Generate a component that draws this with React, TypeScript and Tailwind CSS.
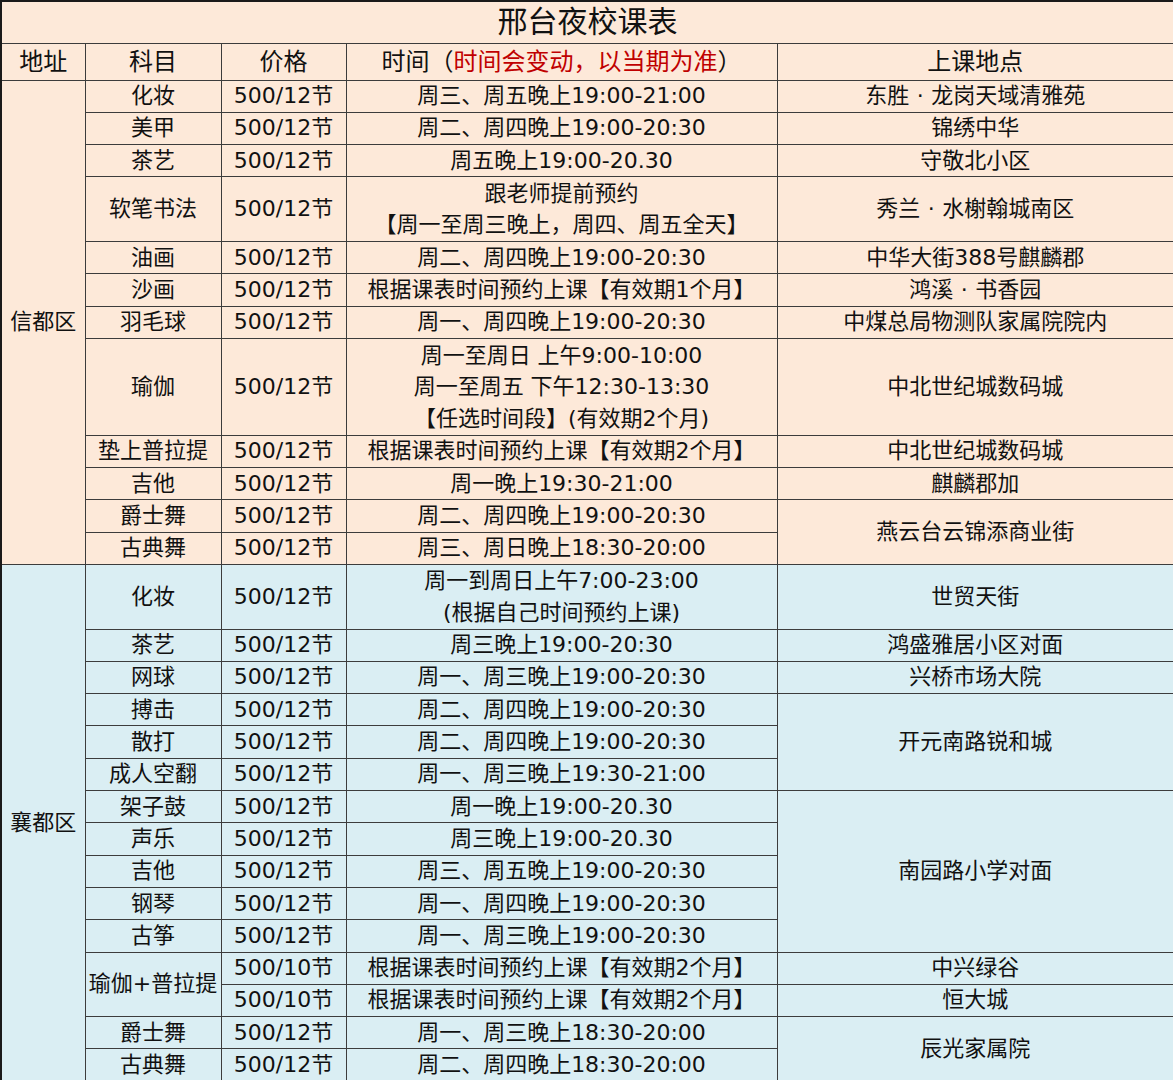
/**
 * 邢台夜校课表
 * Excel-style schedule table with merged cells
 */

type Row = {
  units: number
  subject?: string
  subjectSpan?: number
  price: string
  time: string[]
  place?: string
  placeSpan?: number
}

type Section = {
  area: string
  bg: string
  rows: Row[]
}

const sections: Section[] = [
  {
    area: '信都区',
    bg: 'bg-[#fde9d9]',
    rows: [
      { units: 1, subject: '化妆', price: '500/12节', time: ['周三、周五晚上19:00-21:00'], place: '东胜·龙岗天域清雅苑' },
      { units: 1, subject: '美甲', price: '500/12节', time: ['周二、周四晚上19:00-20:30'], place: '锦绣中华' },
      { units: 1, subject: '茶艺', price: '500/12节', time: ['周五晚上19:00-20.30'], place: '守敬北小区' },
      { units: 2, subject: '软笔书法', price: '500/12节', time: ['跟老师提前预约', '【周一至周三晚上，周四、周五全天】'], place: '秀兰·水榭翰城南区' },
      { units: 1, subject: '油画', price: '500/12节', time: ['周二、周四晚上19:00-20:30'], place: '中华大街388号麒麟郡' },
      { units: 1, subject: '沙画', price: '500/12节', time: ['根据课表时间预约上课【有效期1个月】'], place: '鸿溪·书香园' },
      { units: 1, subject: '羽毛球', price: '500/12节', time: ['周一、周四晚上19:00-20:30'], place: '中煤总局物测队家属院院内' },
      { units: 3, subject: '瑜伽', price: '500/12节', time: ['周一至周日 上午9:00-10:00', '周一至周五 下午12:30-13:30', '【任选时间段】(有效期2个月)'], place: '中北世纪城数码城' },
      { units: 1, subject: '垫上普拉提', price: '500/12节', time: ['根据课表时间预约上课【有效期2个月】'], place: '中北世纪城数码城' },
      { units: 1, subject: '吉他', price: '500/12节', time: ['周一晚上19:30-21:00'], place: '麒麟郡加' },
      { units: 1, subject: '爵士舞', price: '500/12节', time: ['周二、周四晚上19:00-20:30'], place: '燕云台云锦添商业街', placeSpan: 2 },
      { units: 1, subject: '古典舞', price: '500/12节', time: ['周三、周日晚上18:30-20:00'] },
    ],
  },
  {
    area: '襄都区',
    bg: 'bg-[#daeef3]',
    rows: [
      { units: 2, subject: '化妆', price: '500/12节', time: ['周一到周日上午7:00-23:00', '(根据自己时间预约上课)'], place: '世贸天街' },
      { units: 1, subject: '茶艺', price: '500/12节', time: ['周三晚上19:00-20:30'], place: '鸿盛雅居小区对面' },
      { units: 1, subject: '网球', price: '500/12节', time: ['周一、周三晚上19:00-20:30'], place: '兴桥市场大院' },
      { units: 1, subject: '搏击', price: '500/12节', time: ['周二、周四晚上19:00-20:30'], place: '开元南路锐和城', placeSpan: 3 },
      { units: 1, subject: '散打', price: '500/12节', time: ['周二、周四晚上19:00-20:30'] },
      { units: 1, subject: '成人空翻', price: '500/12节', time: ['周一、周三晚上19:30-21:00'] },
      { units: 1, subject: '架子鼓', price: '500/12节', time: ['周一晚上19:00-20.30'], place: '南园路小学对面', placeSpan: 5 },
      { units: 1, subject: '声乐', price: '500/12节', time: ['周三晚上19:00-20.30'] },
      { units: 1, subject: '吉他', price: '500/12节', time: ['周三、周五晚上19:00-20:30'] },
      { units: 1, subject: '钢琴', price: '500/12节', time: ['周一、周四晚上19:00-20:30'] },
      { units: 1, subject: '古筝', price: '500/12节', time: ['周一、周三晚上19:00-20:30'] },
      { units: 1, subject: '瑜伽+普拉提', subjectSpan: 2, price: '500/10节', time: ['根据课表时间预约上课【有效期2个月】'], place: '中兴绿谷' },
      { units: 1, price: '500/10节', time: ['根据课表时间预约上课【有效期2个月】'], place: '恒大城' },
      { units: 1, subject: '爵士舞', price: '500/12节', time: ['周一、周三晚上18:30-20:00'], place: '辰光家属院', placeSpan: 2 },
      { units: 1, subject: '古典舞', price: '500/12节', time: ['周二、周四晚上18:30-20:00'] },
    ],
  },
]

const cell = 'border border-[#3c3c3c] p-0 text-center align-middle'

// render middle dot as a full-width glyph like the source sheet
function Text({ value }: { value: string }) {
  const parts = value.split('·')
  return (
    <>
      {parts.map((p, i) => (
        <span key={i}>
          {i > 0 && <span className="inline-block w-[1em] text-center">·</span>}
          {p}
        </span>
      ))}
    </>
  )
}

export default function App() {
  return (
    <div
      className="w-[1173px] h-[1080px] overflow-hidden bg-white text-[#111] text-[22px] leading-[30px]"
      style={{ fontFamily: '"DejaVu Sans", "Noto Sans CJK SC", sans-serif' }}
    >
      <table className="w-[1173px] table-fixed border-collapse border-2 border-[#1a1a1a]">
        <colgroup>
          <col className="w-[84px]" />
          <col className="w-[136px]" />
          <col className="w-[125px]" />
          <col className="w-[431px]" />
          <col className="w-[397px]" />
        </colgroup>
        <tbody>
          <tr className="h-[42px] bg-[#fde9d9]">
            <td colSpan={5} className={`${cell} text-[30px] leading-[38px]`}>
              邢台夜校课表
            </td>
          </tr>
          <tr className="h-[37px] bg-[#fde9d9] text-[24px] leading-[34px]">
            <td className={cell}>地址</td>
            <td className={cell}>科目</td>
            <td className={cell}>价格</td>
            <td className={cell}>
              时间（<span className="text-[#c00000]">时间会变动，以当期为准</span>）
            </td>
            <td className={cell}>上课地点</td>
          </tr>

          {sections.map((section) => {
            const total = section.rows.length
            return section.rows.map((row, i) => (
              <tr
                key={section.area + i}
                className={section.bg}
                style={{ height: `${row.units * 32.3}px` }}
              >
                {i === 0 && (
                  <td rowSpan={total} className={cell}>
                    {section.area}
                  </td>
                )}
                {row.subject && (
                  <td rowSpan={row.subjectSpan || 1} className={cell}>
                    {row.subject}
                  </td>
                )}
                <td className={cell}>{row.price}</td>
                <td className={`${cell} ${row.time.length > 1 ? 'leading-[31.5px]' : ''}`}>
                  {row.time.map((line) => (
                    <div key={line}>{line}</div>
                  ))}
                </td>
                {row.place && (
                  <td rowSpan={row.placeSpan || 1} className={cell}>
                    <Text value={row.place} />
                  </td>
                )}
              </tr>
            ))
          })}
        </tbody>
      </table>
    </div>
  )
}
